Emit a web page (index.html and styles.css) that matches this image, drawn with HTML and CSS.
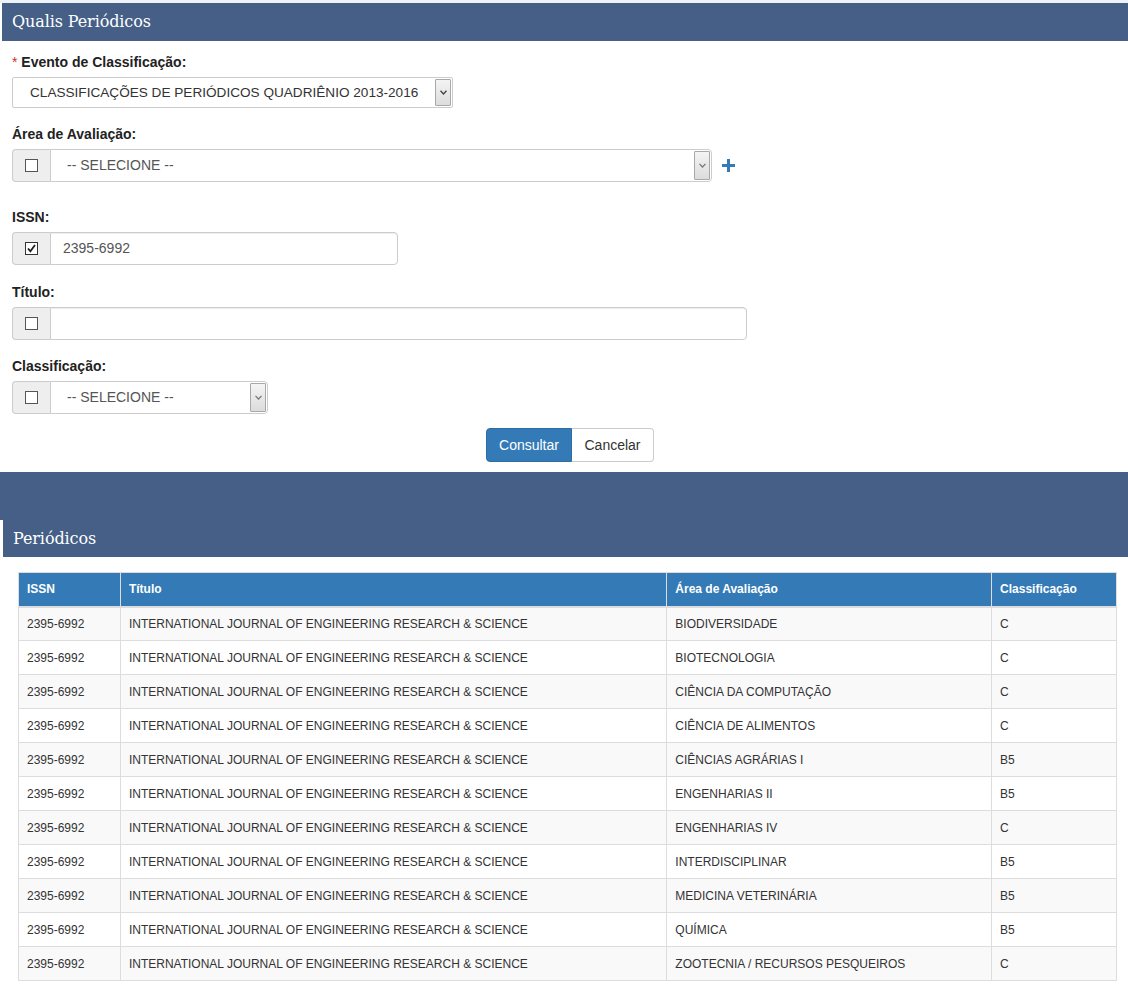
FILE: index.html
```html
<!DOCTYPE html>
<html lang="pt-BR">
<head>
<meta charset="utf-8">
<title>Qualis Periódicos</title>
<link rel="stylesheet" href="styles.css">
</head>
<body>
<div class="topstrip"></div>
<section class="panel">
  <h2 class="panel-title">Qualis Periódicos</h2>
  <form class="form">
    <div class="form-group g-evento">
      <label class="lbl"><span class="req">*</span> Evento de Classificação:</label>
      <div class="select sel-evento">
        <span class="sel-value">CLASSIFICAÇÕES DE PERIÓDICOS QUADRIÊNIO 2013-2016</span>
        <span class="sel-arrow"><svg width="7" height="5" viewBox="0 0 7 5"><path d="M0.5 0.8 L3.5 4 L6.5 0.8" fill="none" stroke="#444" stroke-width="1.4"/></svg></span>
      </div>
    </div>

    <div class="form-group g-area">
      <label class="lbl">Área de Avaliação:</label>
      <div class="row-plus">
        <div class="input-group w-area">
          <span class="addon"><span class="cb"></span></span>
          <div class="select grp">
            <span class="sel-value pad">-- SELECIONE --</span>
            <span class="sel-arrow"><svg width="7" height="5" viewBox="0 0 7 5"><path d="M0.5 0.8 L3.5 4 L6.5 0.8" fill="none" stroke="#777" stroke-width="1.2"/></svg></span>
          </div>
        </div>
        <span class="plus"><svg width="13" height="13" viewBox="0 0 13 13"><path d="M5 0h3v5h5v3H8v5H5V8H0V5h5z" fill="#337ab7"/></svg></span>
      </div>
    </div>

    <div class="form-group g-issn">
      <label class="lbl">ISSN:</label>
      <div class="input-group w-issn">
        <span class="addon"><span class="cb checked"><svg width="11" height="11" viewBox="0 0 11 11"><path d="M2 5.5 L4.4 8.2 L9 2" fill="none" stroke="#222" stroke-width="1.8"/></svg></span></span>
        <div class="field">2395-6992</div>
      </div>
    </div>

    <div class="form-group g-titulo">
      <label class="lbl">Título:</label>
      <div class="input-group w-titulo">
        <span class="addon"><span class="cb"></span></span>
        <div class="field"></div>
      </div>
    </div>

    <div class="form-group g-class">
      <label class="lbl">Classificação:</label>
      <div class="input-group w-class">
        <span class="addon"><span class="cb"></span></span>
        <div class="select grp">
          <span class="sel-value pad">-- SELECIONE --</span>
          <span class="sel-arrow"><svg width="7" height="5" viewBox="0 0 7 5"><path d="M0.5 0.8 L3.5 4 L6.5 0.8" fill="none" stroke="#777" stroke-width="1.2"/></svg></span>
        </div>
      </div>
    </div>

    <div class="actions">
      <div class="btn-group">
        <button type="button" class="btn btn-primary">Consultar</button>
        <button type="button" class="btn btn-default">Cancelar</button>
      </div>
    </div>
  </form>
</section>

<div class="band"></div>

<section class="results">
  <h2 class="panel-title sub">Periódicos</h2>
  <div class="table-wrap">
    <table class="tbl">
      <thead>
        <tr><th class="c1">ISSN</th><th class="c2">Título</th><th class="c3">Área de Avaliação</th><th class="c4">Classificação</th></tr>
      </thead>
      <tbody>
        <tr><td>2395-6992</td><td>INTERNATIONAL JOURNAL OF ENGINEERING RESEARCH &amp; SCIENCE</td><td>BIODIVERSIDADE</td><td>C</td></tr>
        <tr><td>2395-6992</td><td>INTERNATIONAL JOURNAL OF ENGINEERING RESEARCH &amp; SCIENCE</td><td>BIOTECNOLOGIA</td><td>C</td></tr>
        <tr><td>2395-6992</td><td>INTERNATIONAL JOURNAL OF ENGINEERING RESEARCH &amp; SCIENCE</td><td>CIÊNCIA DA COMPUTAÇÃO</td><td>C</td></tr>
        <tr><td>2395-6992</td><td>INTERNATIONAL JOURNAL OF ENGINEERING RESEARCH &amp; SCIENCE</td><td>CIÊNCIA DE ALIMENTOS</td><td>C</td></tr>
        <tr><td>2395-6992</td><td>INTERNATIONAL JOURNAL OF ENGINEERING RESEARCH &amp; SCIENCE</td><td>CIÊNCIAS AGRÁRIAS I</td><td>B5</td></tr>
        <tr><td>2395-6992</td><td>INTERNATIONAL JOURNAL OF ENGINEERING RESEARCH &amp; SCIENCE</td><td>ENGENHARIAS II</td><td>B5</td></tr>
        <tr><td>2395-6992</td><td>INTERNATIONAL JOURNAL OF ENGINEERING RESEARCH &amp; SCIENCE</td><td>ENGENHARIAS IV</td><td>C</td></tr>
        <tr><td>2395-6992</td><td>INTERNATIONAL JOURNAL OF ENGINEERING RESEARCH &amp; SCIENCE</td><td>INTERDISCIPLINAR</td><td>B5</td></tr>
        <tr><td>2395-6992</td><td>INTERNATIONAL JOURNAL OF ENGINEERING RESEARCH &amp; SCIENCE</td><td>MEDICINA VETERINÁRIA</td><td>B5</td></tr>
        <tr><td>2395-6992</td><td>INTERNATIONAL JOURNAL OF ENGINEERING RESEARCH &amp; SCIENCE</td><td>QUÍMICA</td><td>B5</td></tr>
        <tr><td>2395-6992</td><td>INTERNATIONAL JOURNAL OF ENGINEERING RESEARCH &amp; SCIENCE</td><td>ZOOTECNIA / RECURSOS PESQUEIROS</td><td>C</td></tr>
      </tbody>
    </table>
  </div>
</section>
</body>
</html>
```
FILE: styles.css
```css
* { box-sizing: border-box; }
html, body { margin: 0; padding: 0; }
body {
  background: #fff;
  font-family: "Liberation Sans", Arial, sans-serif;
  color: #333;
  font-size: 13px;
}
.topstrip { height: 3px; background: #eef3f8; }
.panel { padding-left: 2px; }
.panel-title {
  margin: 0;
  height: 38px;
  background: #455f87;
  color: #fff;
  font-family: "DejaVu Serif", serif;
  font-weight: normal;
  font-size: 16px;
  letter-spacing: -0.1px;
  line-height: 38px;
  padding-left: 10px;
}
.form { padding: 12px 0 10px 10px; }
.form-group { display: flex; flex-direction: column; align-items: flex-start; }
.lbl {
  display: block;
  font-weight: bold;
  font-size: 14px;
  line-height: 18px;
  margin-bottom: 6px;
  color: #222;
}
.req { color: #c9302c; font-weight: normal; }
.g-area { margin-top: 17px; }
.g-issn { margin-top: 26px; }
.g-titulo { margin-top: 18px; }
.g-class { margin-top: 17px; }

.select {
  display: flex;
  align-items: stretch;
  background: #fff;
  border: 1px solid #ccc;
  font-size: 14px;
  color: #555;
}
.sel-evento { width: 441px; height: 31px; border-radius: 2px; padding: 1px; }
.sel-evento .sel-value { flex: 1; padding-left: 16px; line-height: 27px; color: #333; font-size: 13.6px; }
.sel-value { white-space: nowrap; overflow: hidden; }
.sel-arrow {
  width: 16px;
  display: flex;
  align-items: center;
  justify-content: center;
  background: linear-gradient(#f4f4f4, #dcdcdc);
  border: 1px solid #a8a8a8;
  border-radius: 1px;
}

.row-plus { display: flex; align-items: center; }
.plus { margin-left: 10px; display: flex; }
.input-group { display: flex; height: 33px; }
.w-area { width: 700px; }
.w-issn { width: 386px; }
.w-titulo { width: 735px; }
.w-class { width: 256px; }
.addon {
  width: 38px;
  flex: none;
  background: #eee;
  border: 1px solid #ccc;
  border-right: 0;
  border-radius: 4px 0 0 4px;
  display: flex;
  align-items: center;
  justify-content: center;
}
.cb {
  width: 13px; height: 13px;
  border: 1px solid #555;
  background: #fff;
  display: flex; align-items: center; justify-content: center;
}
.cb.checked { border-color: #333; }
.select.grp { flex: 1; border-radius: 0 4px 4px 0; padding: 1px 1px 1px 0; }
.select.grp .sel-value { flex: 1; padding-left: 16px; line-height: 29px; color: #555; }
.field {
  flex: 1;
  border: 1px solid #ccc;
  border-radius: 0 4px 4px 0;
  box-shadow: inset 0 1px 1px rgba(0,0,0,.075);
  padding-left: 12px;
  line-height: 31px;
  font-size: 14px;
  color: #555;
}

.actions { display: flex; justify-content: center; margin-top: 14px; }
.btn-group { display: flex; }
.btn {
  font-family: "Liberation Sans", Arial, sans-serif;
  font-size: 14px;
  height: 34px;
  padding: 0 12px;
  border: 1px solid;
  margin: 0;
  line-height: 32px;
}
.btn-primary {
  background: #337ab7; border-color: #2e6da4; color: #fff;
  border-radius: 4px 0 0 4px; width: 86px;
}
.btn-default {
  background: #fff; border-color: #ccc; color: #333;
  border-left: 0; border-radius: 0 4px 4px 0; width: 82px;
}

.band { height: 48px; background: #455f87; margin-top: 0; }
.results { padding-left: 3px; }
.panel-title.sub { height: 37px; line-height: 37px; font-size: 16px; }

.table-wrap { padding: 15px 11px 0 15px; }
.tbl {
  width: 1099px;
  border-collapse: collapse;
  font-size: 12px;
  color: #333;
}
.tbl th {
  background: #337ab7;
  color: #fff;
  font-weight: bold;
  text-align: left;
  height: 34px;
  padding: 0 8px;
  border: 1px solid #ddd;
  border-bottom: 2px solid #ddd;
}
.tbl td {
  height: 34px;
  padding: 0 8px;
  border: 1px solid #ddd;
}
.tbl tbody tr:nth-child(odd) { background: #f9f9f9; }
.c1 { width: 102px; }
.c2 { width: 547px; }
.c3 { width: 325px; }
.c4 { width: 125px; }
```
